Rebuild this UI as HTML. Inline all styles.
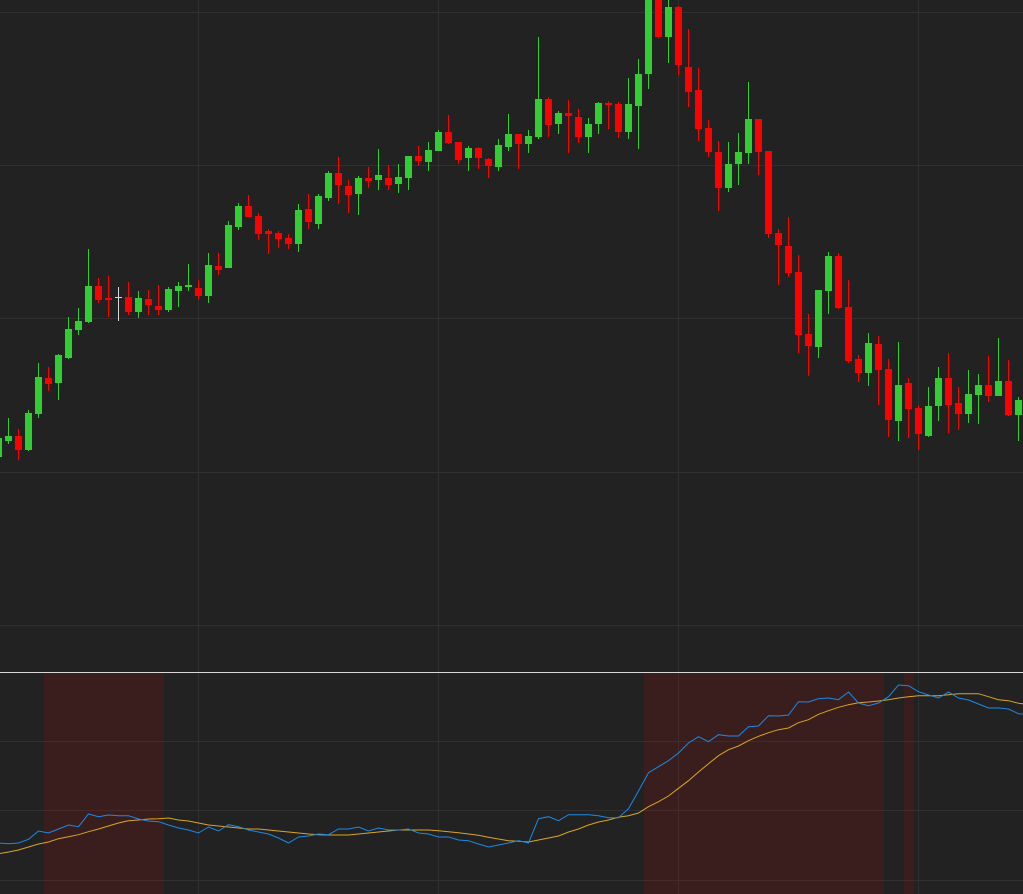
<!DOCTYPE html>
<html><head><meta charset="utf-8"><title>Chart</title>
<style>html,body{margin:0;padding:0;background:#222;width:1023px;height:894px;overflow:hidden}svg{display:block}</style></head>
<body>
<svg xmlns="http://www.w3.org/2000/svg" width="1023" height="894" viewBox="0 0 1023 894">
<rect width="1023" height="894" fill="#222222"/>
<g shape-rendering="crispEdges" fill="none" stroke="#303030" stroke-width="1">
<path d="M0 12.5H1023M0 165.5H1023M0 318.5H1023M0 472.5H1023M0 625.5H1023M0 741.5H1023M0 810.5H1023M0 880.5H1023"/>
<path d="M198.5 0V894M438.5 0V894M678.5 0V894M918.5 0V894"/>
</g>
<g shape-rendering="crispEdges" fill="#ff0000" fill-opacity="0.11">
<rect x="44" y="673" width="120" height="221"/>
<rect x="644" y="673" width="240" height="221"/>
<rect x="904" y="673" width="10" height="221"/>
</g>
<g shape-rendering="crispEdges" fill="none">
<!-- green wicks -->
<path stroke="#32cd32" stroke-width="1" d="M8.5 418V444M28.5 410V451M38.5 363V418M58.5 354V400M68.5 317V359M78.5 308V335M88.5 249V323M138.5 291V318M168.5 287V312M178.5 282V307M188.5 264V291M208.5 253V303M228.5 221V268M238.5 203V230M298.5 204V252M318.5 194V229M328.5 171V201M358.5 176V215M378.5 149V190M398.5 164V193M408.5 156V190M428.5 142V171M438.5 130V151M468.5 146V171M498.5 139V171M508.5 114V151M528.5 130V153M538.5 37V139M558.5 111V134M588.5 118V153M598.5 102V134M628.5 78V139M638.5 59V149M648.5 0V89M668.5 0V63M728.5 142V192M738.5 133V185M748.5 82V164M818.5 290V358M828.5 252V314M868.5 333V386M898.5 342V441M928.5 387V437M938.5 367V421M968.5 370V423M978.5 374V424M998.5 338V396M1018.5 397V441"/>
<!-- green bodies -->
<path stroke="#32cd32" stroke-width="7" d="M-1.5 438V457M8.5 436V441M28.5 413V450M38.5 377V414M58.5 355V383M68.5 329V358M78.5 321V330M88.5 286V322M138.5 298V312M168.5 289V310M178.5 286V291M188.5 285V287M208.5 265V296M228.5 225V268M238.5 206V227M298.5 210V244M318.5 196V224M328.5 173V198M358.5 178V194M378.5 175V180M398.5 177V184M408.5 156V178M428.5 150V162M438.5 132V151M468.5 148V158M498.5 145V167M508.5 134V147M528.5 136V144M538.5 99V137M558.5 113V124M588.5 124V137M598.5 103V124M628.5 104V132M638.5 74V106M648.5 0V74M668.5 7V37M728.5 164V188M738.5 152V164M748.5 119V153M818.5 290V347M828.5 256V291M868.5 343V373M898.5 385V421M928.5 406V436M938.5 378V406M968.5 394V414M978.5 385V395M998.5 381V396M1018.5 400V415"/>
<!-- red wicks -->
<path stroke="#ff0000" stroke-width="1" d="M18.5 429V460M48.5 367V391M98.5 278V303M108.5 276V317M128.5 282V315M148.5 290V315M158.5 285V315M198.5 280V300M218.5 253V275M248.5 195V217M258.5 213V240M268.5 229V254M278.5 231V248M288.5 234V249M308.5 194V229M338.5 157V204M348.5 180V213M368.5 167V188M388.5 165V190M418.5 146V166M448.5 115V144M458.5 142V164M478.5 147V169M488.5 158V178M518.5 134V169M548.5 97V137M568.5 100V153M578.5 109V143M608.5 101V129M618.5 102V138M658.5 0V38M678.5 6V75M688.5 29V107M698.5 68V141M708.5 120V157M718.5 141V211M758.5 119V175M768.5 151V238M778.5 229V285M788.5 217V277M798.5 255V353M808.5 314V376M838.5 253V309M848.5 280V363M858.5 355V382M878.5 336V405M888.5 359V437M908.5 378V438M918.5 405V450M948.5 353V433M958.5 387V430M988.5 356V402M1008.5 360V416"/>
<!-- red bodies -->
<path stroke="#ff0000" stroke-width="7" d="M18.5 436V450M48.5 378V384M98.5 286V300M108.5 298V300M128.5 297V312M148.5 299V305M158.5 306V310M198.5 288V296M218.5 266V270M248.5 206V217M258.5 216V234M268.5 231V234M278.5 233V239M288.5 238V244M308.5 209V222M338.5 173V185M348.5 186V195M368.5 178V181M388.5 178V185M418.5 156V161M448.5 132V143M458.5 142V160M478.5 148V158M488.5 159V166M518.5 134V144M548.5 99V125M568.5 113V116M578.5 117V137M608.5 103V105M618.5 104V132M658.5 0V37M678.5 7V65M688.5 67V92M698.5 90V129M708.5 128V152M718.5 152V188M758.5 119V152M768.5 151V234M778.5 233V245M788.5 246V273M798.5 272V335M808.5 334V346M838.5 256V308M848.5 307V361M858.5 359V373M878.5 344V370M888.5 369V420M908.5 383V409M918.5 408V434M948.5 378V405M958.5 403V414M988.5 385V396M1008.5 381V415"/>
<!-- white doji -->
<path stroke="#d8d8d8" stroke-width="1" d="M118.5 287V321"/>
<path stroke="#d8d8d8" stroke-width="7" d="M118.5 297V298"/>
</g>
<polyline fill="none" stroke="#daa520" stroke-width="1" points="-1.5,853.7 8.5,852 18.5,850 28.5,847 38.5,844 48.5,842 58.5,838.7 68.5,836.7 78.5,834.7 88.5,831.7 98.5,829 108.5,826 118.5,823 128.5,820.7 138.5,820 148.5,819 158.5,818.7 168.5,818 178.5,820 188.5,821 198.5,823 208.5,825 218.5,826 228.5,827 238.5,828 248.5,829 258.5,829 268.5,830 278.5,831 288.5,832 298.5,833 308.5,834 318.5,834.7 328.5,835 338.5,835 348.5,835 358.5,834 368.5,833 378.5,832 388.5,831 398.5,830 408.5,830 418.5,830 428.5,830 438.5,830.7 448.5,831.7 458.5,832.7 468.5,834 478.5,835.3 488.5,837.3 498.5,839 508.5,840.7 518.5,841.3 528.5,842 538.5,840 548.5,838 558.5,836 568.5,832 578.5,829 588.5,825 598.5,822 608.5,820 618.5,817.3 628.5,815.7 638.5,813 648.5,806.7 658.5,801.7 668.5,796 678.5,788.3 688.5,780.7 698.5,772 708.5,763.7 718.5,755.7 728.5,749.7 738.5,746 748.5,740.7 758.5,736.3 768.5,732.7 778.5,729.7 788.5,728 798.5,722.7 808.5,719.7 818.5,714.3 828.5,710.7 838.5,707.3 848.5,704.7 858.5,702.7 868.5,702 878.5,701 888.5,699.7 898.5,698 908.5,696.7 918.5,695.7 928.5,695.7 938.5,695.7 948.5,694.7 958.5,693.7 968.5,693.7 978.5,693.7 988.5,696.7 998.5,699.7 1008.5,700.7 1018.5,703.3 1028.5,704.7"/>
<polyline fill="none" stroke="#1e88e5" stroke-width="1" points="-1.5,843 8.5,843.7 18.5,843 28.5,839.3 38.5,831 48.5,833 58.5,829 68.5,825 78.5,826.7 88.5,814 98.5,816.7 108.5,815 118.5,815.7 128.5,815.7 138.5,819 148.5,821 158.5,821.7 168.5,825 178.5,828 188.5,830 198.5,833 208.5,827 218.5,831 228.5,824.7 238.5,826.7 248.5,830 258.5,832 268.5,834 278.5,838 288.5,843 298.5,837 308.5,836 318.5,834 328.5,834.7 338.5,829 348.5,829 358.5,827 368.5,831 378.5,828 388.5,830 398.5,830 408.5,829 418.5,833 428.5,834 438.5,837 448.5,837 458.5,840 468.5,840.7 478.5,844 488.5,847 498.5,845 508.5,843 518.5,840.7 528.5,843 538.5,818.7 548.5,816.7 558.5,820.7 568.5,814.7 578.5,814.7 588.5,814.7 598.5,815.7 608.5,817.7 618.5,817.7 628.5,808.7 638.5,791 648.5,772.7 658.5,766.7 668.5,760.7 678.5,753 688.5,743 698.5,736.7 708.5,741.7 718.5,734.7 728.5,736 738.5,736 748.5,726.7 758.5,726 768.5,715.7 778.5,716 788.5,715 798.5,701.7 808.5,702 818.5,698.7 828.5,698 838.5,699.7 848.5,692 858.5,703 868.5,705.7 878.5,703 888.5,696.7 898.5,685 908.5,685.7 918.5,691.7 928.5,695 938.5,698 948.5,692 958.5,698 968.5,700 978.5,704 988.5,708 998.5,708 1008.5,709 1018.5,713.7 1028.5,714.5"/>
<rect x="0" y="672" width="1023" height="1" fill="#d8d8d8" shape-rendering="crispEdges"/>
</svg>
</body></html>
